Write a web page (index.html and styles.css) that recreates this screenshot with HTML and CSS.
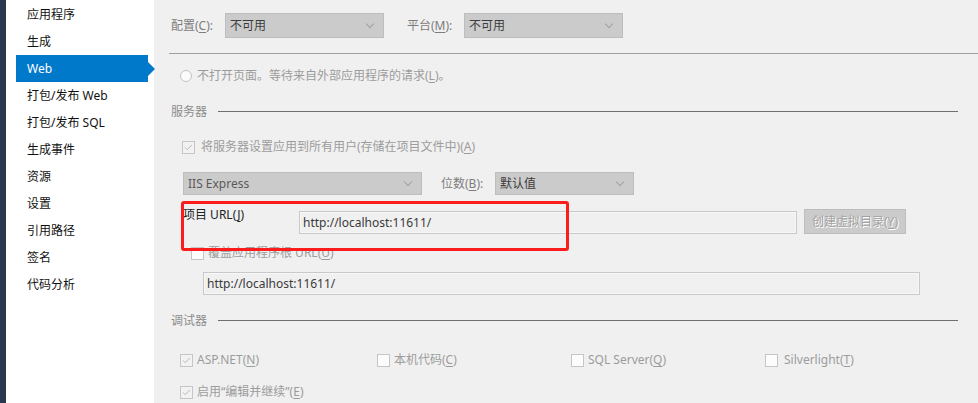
FILE: index.html
```html
<!DOCTYPE html>
<html lang="zh-CN">
<head>
<meta charset="utf-8">
<title>Web</title>
<link rel="stylesheet" href="styles.css">
</head>
<body>
<div class="strip"></div>
<nav class="sidebar">
  <div class="nav-item">应用程序</div>
  <div class="nav-item">生成</div>
  <div class="nav-item active">Web</div>
  <div class="nav-item">打包/发布 Web</div>
  <div class="nav-item">打包/发布 SQL</div>
  <div class="nav-item">生成事件</div>
  <div class="nav-item">资源</div>
  <div class="nav-item">设置</div>
  <div class="nav-item">引用路径</div>
  <div class="nav-item">签名</div>
  <div class="nav-item">代码分析</div>
</nav>
<main class="main">
  <div class="row top-row">
    <span class="lbl lbl-config">配置(<u>C</u>):</span>
    <div class="select sel-top"><span>不可用</span><i class="chev"></i></div>
    <span class="lbl lbl-platform">平台(<u>M</u>):</span>
    <div class="select sel-top"><span>不可用</span><i class="chev"></i></div>
  </div>
  <div class="hr-top"></div>
  <div class="row radio-row">
    <span class="radio"></span>
    <span class="dim">不打开页面。等待来自外部应用程序的请求(<u>L</u>)。</span>
  </div>

  <div class="section section-server">
    <span class="section-title">服务器</span><span class="section-line"></span>
  </div>
  <div class="row check-row server-check">
    <span class="cb checked"><svg viewBox="0 0 13 13"><polyline points="2.5,6.5 5,9 10.5,3.5"/></svg></span>
    <span class="dim">将服务器设置应用到所有用户(存储在项目文件中)(<u>A</u>)</span>
  </div>
  <div class="row iis-row">
    <div class="select sel-iis"><span class="dark">IIS Express</span><i class="chev"></i></div>
    <span class="lbl lbl-bits">位数(<u>B</u>):</span>
    <div class="select sel-bits"><span>默认值</span><i class="chev"></i></div>
  </div>
  <div class="row url-row">
    <span class="url-label">项目 URL(<u>J</u>)</span>
    <div class="textbox tb-url">http://localhost:11611/</div>
    <div class="btn">创建虚拟目录(<u>Y</u>)</div>
  </div>
  <div class="row check-row override-row">
    <span class="cb"></span>
    <span class="dim">覆盖应用程序根 URL(<u>U</u>)</span>
  </div>
  <div class="textbox tb-override">http://localhost:11611/</div>

  <div class="section section-debug">
    <span class="section-title">调试器</span><span class="section-line"></span>
  </div>
  <div class="row check-row debug-row">
    <div class="check-item w1">
      <span class="cb checked"><svg viewBox="0 0 13 13"><polyline points="2.5,6.5 5,9 10.5,3.5"/></svg></span>
      <span class="dim">ASP.NET(<u>N</u>)</span>
    </div>
    <div class="check-item w2">
      <span class="cb"></span>
      <span class="dim">本机代码(<u>C</u>)</span>
    </div>
    <div class="check-item w2">
      <span class="cb"></span>
      <span class="dim">SQL Server(<u>Q</u>)</span>
    </div>
    <div class="check-item">
      <span class="cb"></span>
      <span class="dim sl">Silverlight(<u>T</u>)</span>
    </div>
  </div>
  <div class="row check-row last-row">
    <span class="cb checked"><svg viewBox="0 0 13 13"><polyline points="2.5,6.5 5,9 10.5,3.5"/></svg></span>
    <span class="dim">启用“编辑并继续”(<u>E</u>)</span>
  </div>

  <div class="annot"></div>
</main>
</body>
</html>
```
FILE: styles.css
```css
html, body {
  margin: 0;
  padding: 0;
  height: 100%;
}
body {
  display: flex;
  width: 978px;
  height: 403px;
  overflow: hidden;
  font-family: "Noto Sans", "Noto Sans CJK SC", sans-serif;
  font-size: 12px;
  line-height: 16px;
  color: #1e1e1e;
  background: #f0f0f0;
}
u { text-decoration: underline; text-underline-offset: 2px; }

.strip {
  width: 6px;
  background: #293751;
  flex: none;
}
.sidebar {
  width: 148px;
  flex: none;
  background: #ffffff;
  padding-top: 1px;
}
.nav-item {
  height: 27px;
  line-height: 27px;
  margin: 0 6px 0 10px;
  padding-left: 11px;
  color: #111;
  position: relative;
}
.nav-item.active {
  background: #0179cb;
  color: #fff;
}
.nav-item.active::after {
  content: "";
  position: absolute;
  right: -7px;
  top: 7px;
  border-left: 7px solid #0179cb;
  border-top: 7px solid transparent;
  border-bottom: 7px solid transparent;
}

.main {
  flex: 1;
  position: relative;
  display: flex;
  flex-direction: column;
  align-items: flex-start;
}
.row {
  display: flex;
  align-items: center;
}
.lbl { color: #7d7d7d; }
.dim { color: #9c9c9c; }
.dark { color: #5a5a5a; }

.top-row { margin: 13px 0 0 17px; height: 25px; }
.lbl-config { width: 54px; }
.lbl-platform { margin-left: 23px; width: 57px; }

.select {
  box-sizing: border-box;
  height: 25px;
  border: 1px solid #bdbdbd;
  background: #cbcbcb;
  display: flex;
  align-items: center;
  padding-left: 4px;
  position: relative;
  color: #3c3c3c;
}
.sel-top { width: 159px; }
.chev {
  position: absolute;
  right: 10px;
  top: 50%;
  width: 5px;
  height: 5px;
  margin-top: -5px;
  border-right: 1px solid #a2a2a2;
  border-bottom: 1px solid #a2a2a2;
  transform: rotate(45deg);
}

.hr-top {
  align-self: stretch;
  margin: 15px 0 0 15px;
  height: 1px;
  background: #a0a0a0;
}

.radio-row { margin: 14px 0 0 26px; height: 16px; }
.radio {
  box-sizing: border-box;
  width: 12px;
  height: 12px;
  border: 1px solid #c3c3c3;
  border-radius: 50%;
  background: #fbfbfb;
  margin-right: 5px;
}

.section {
  align-self: stretch;
  display: flex;
  align-items: center;
  height: 16px;
  margin-left: 17px;
  margin-right: 20px;
}
.section-title { color: #8c8c8c; width: 47px; }
.section-line {
  flex: 1;
  height: 1px;
  background: #707070;
  margin-top: -1px;
}
.section-server { margin-top: 20px; }
.section-debug { margin-top: 18px; }

.check-row { height: 16px; }
.cb {
  box-sizing: border-box;
  width: 13px;
  height: 13px;
  border: 1px solid #c6c6c6;
  background: #fcfcfc;
  flex: none;
  display: flex;
}
.cb.checked { background: #f2f2f2; }
.cb svg { width: 11px; height: 11px; }
.cb polyline { fill: none; stroke: #b3b3b3; stroke-width: 1.1; }
.server-check { margin: 19px 0 0 28px; }
.server-check .cb { margin-right: 6px; }

.iis-row { margin: 17px 0 0 29px; height: 23px; }
.sel-iis { width: 239px; height: 23px; }
.lbl-bits { margin-left: 19px; width: 54px; }
.sel-bits { width: 139px; height: 23px; }

.url-row { margin: 12px 0 0 29px; align-items: flex-start; }
.url-label { width: 116px; color: #222; }
.textbox {
  box-sizing: border-box;
  height: 23px;
  border: 1px solid #c9c9c9;
  box-shadow: inset 0 0 0 1px #f7f7f7;
  background: #f0f0f0;
  padding-left: 3px;
  line-height: 21px;
  color: #3a3a3a;
}
.tb-url { width: 498px; margin-top: 4px; }
.btn {
  box-sizing: border-box;
  width: 102px;
  height: 25px;
  margin: 2px 0 0 7px;
  background: #cbcbcb;
  border: 1px solid #bdbdbd;
  color: #a3a3a3;
  text-shadow: 1px 1px 0 #ffffff;
  text-align: center;
  line-height: 23px;
}

.override-row { margin: 11px 0 0 37px; }
.override-row .cb { margin-right: 4px; }
.tb-override { width: 717px; margin: 11px 0 0 49px; }

.debug-row { margin: 23px 0 0 26px; }
.check-item { display: flex; align-items: center; }
.check-item .cb { margin-right: 4px; }
.w1 { width: 197px; }
.w2 { width: 194px; }
.sl { margin-left: 2px; }
.last-row { margin: 16px 0 0 26px; }
.last-row .cb { margin-right: 4px; }

.annot {
  position: absolute;
  left: 27px;
  top: 201px;
  width: 388px;
  height: 50px;
  box-sizing: border-box;
  border: 3px solid #fd1c1c;
  border-radius: 3px;
}
```
